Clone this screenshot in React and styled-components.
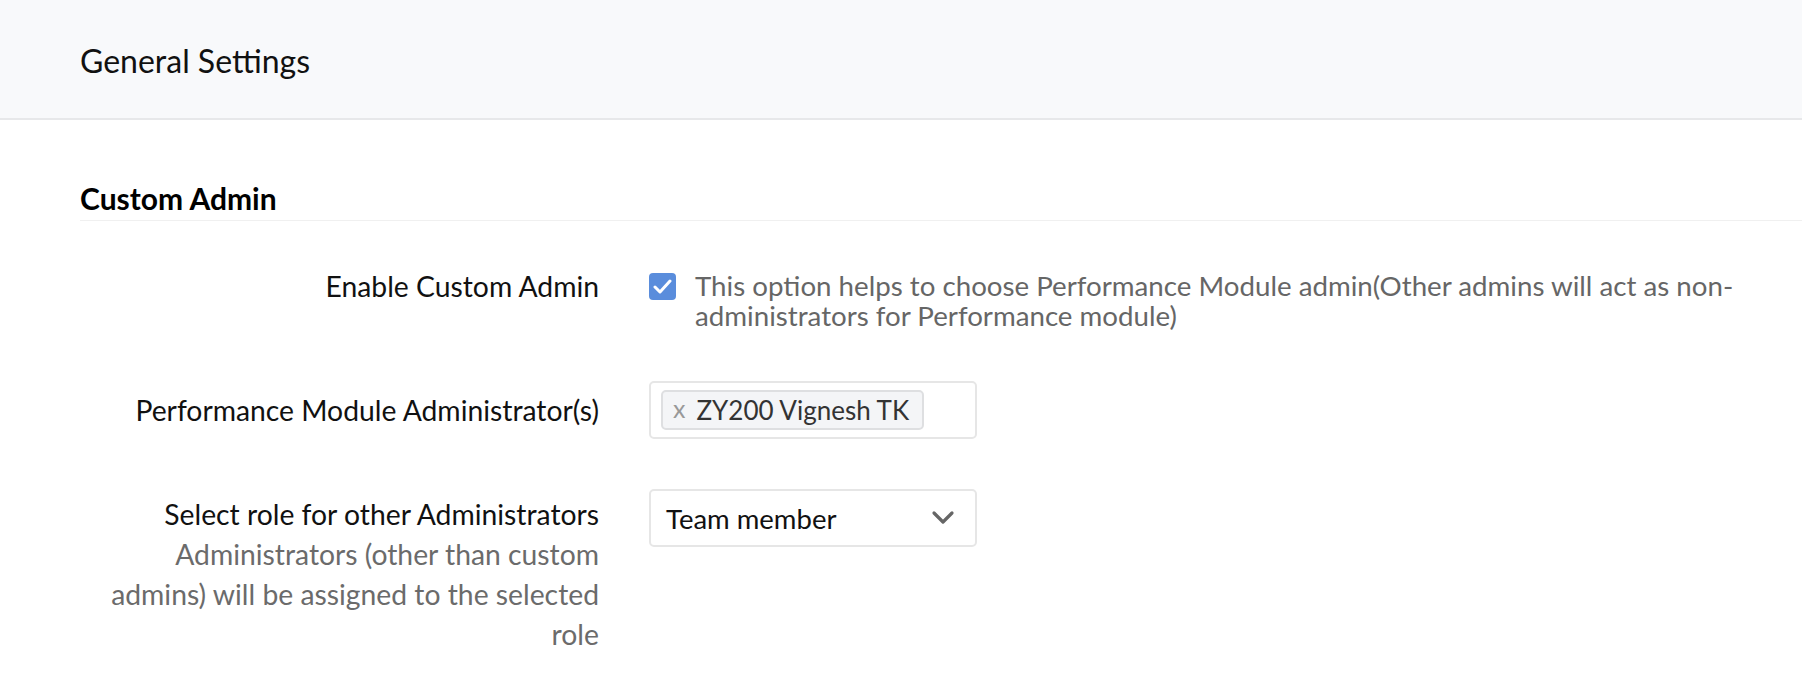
import React from 'react';
import styled, { createGlobalStyle } from 'styled-components';

const GlobalStyle = createGlobalStyle`
  html, body {
    margin: 0;
    padding: 0;
    background: #ffffff;
    font-family: Lato, 'Open Sans', sans-serif;
    color: #111111;
  }
  * {
    box-sizing: border-box;
  }
`;

const StyledHeader = styled.header`
  height: 120px;
  display: flex;
  align-items: center;
  padding-left: 80px;
  padding-top: 2px;
  background: #f8f9fb;
  border-bottom: 2px solid #e7e8ea;
  font-size: 32px;
  color: #111111;
`;

const StyledSection = styled.section`
  padding: 0 0 40px 80px;
`;

const SectionTitle = styled.h2`
  margin: 60px 0 0 0;
  padding-bottom: 4px;
  font-size: 30px;
  line-height: 36px;
  font-weight: 700;
  color: #000000;
  border-bottom: 1px solid #f0f0f0;
`;

const Form = styled.div`
  display: flex;
  flex-direction: column;
  gap: 50px;
  margin-top: 50px;
`;

const Row = styled.div`
  display: grid;
  grid-template-columns: 519px 1fr;
  column-gap: 50px;
  align-items: ${({ $center }) => ($center ? 'center' : 'start')};
`;

const Label = styled.div`
  justify-self: end;
  max-width: 492px;
  padding-top: ${({ $offset }) => ($offset ? '5px' : '0')};
  text-align: right;
  font-size: 28.3px;
  line-height: ${({ $tight }) => ($tight ? '30px' : '40px')};
  color: #111111;
`;

const Hint = styled.div`
  color: #6b6b6b;
`;

const CheckRow = styled.div`
  display: flex;
  align-items: flex-start;
  gap: 19px;
  padding-right: 40px;
`;

const Checkbox = styled.span`
  flex: none;
  width: 27px;
  height: 27px;
  margin-top: 2px;
  border-radius: 4px;
  background: #5a8ddc;
  display: flex;
  align-items: center;
  justify-content: center;
`;

const Description = styled.div`
  max-width: 1080px;
  font-size: 27.7px;
  line-height: 30px;
  color: #666666;
`;

const Field = styled.div`
  width: 328px;
  height: 58px;
  border: 2px solid #e6e6e6;
  border-radius: 5px;
  background: #ffffff;
  display: flex;
  align-items: center;
  padding: 0 ${({ $select }) => ($select ? '20px 0 15px' : '10px')};
  justify-content: ${({ $select }) => ($select ? 'space-between' : 'flex-start')};
  font-size: 27.5px;
  color: #111111;
`;

const Chip = styled.span`
  display: inline-flex;
  align-items: center;
  height: 40px;
  padding: 0 13px 0 10px;
  gap: 11px;
  background: #f4f5f7;
  border: 2px solid #dedfe1;
  border-radius: 5px;
  font-size: 26px;
  color: #333333;
`;

const ChipRemove = styled.span`
  color: #999999;
  font-size: 25px;
  line-height: 1;
  margin-top: -3px;
`;

const Chevron = () => (
  <svg width="24" height="16" viewBox="0 0 24 16" fill="none">
    <polyline points="3,3 12,12 21,3" stroke="#666666" strokeWidth="3.2" strokeLinecap="round" strokeLinejoin="round" />
  </svg>
);

const Tick = () => (
  <svg width="19" height="15" viewBox="0 0 19 15" fill="none">
    <polyline points="2,8 7,13 17,2" stroke="#ffffff" strokeWidth="3" strokeLinecap="round" strokeLinejoin="round" />
  </svg>
);

const App = () => (
  <>
    <GlobalStyle />
    <StyledHeader>General Settings</StyledHeader>
    <StyledSection>
      <SectionTitle>Custom Admin</SectionTitle>
      <Form>
        <Row>
          <Label $tight>Enable Custom Admin</Label>
          <CheckRow>
            <Checkbox>
              <Tick />
            </Checkbox>
            <Description>
              This option helps to choose Performance Module admin(Other admins will act as non-administrators for
              Performance module)
            </Description>
          </CheckRow>
        </Row>
        <Row $center>
          <Label>Performance Module Administrator(s)</Label>
          <Field>
            <Chip>
              <ChipRemove>x</ChipRemove>
              ZY200 Vignesh TK
            </Chip>
          </Field>
        </Row>
        <Row>
          <Label $offset>
            Select role for other Administrators
            <Hint>Administrators (other than custom admins) will be assigned to the selected role</Hint>
          </Label>
          <Field $select>
            Team member
            <Chevron />
          </Field>
        </Row>
      </Form>
    </StyledSection>
  </>
);

export default App;
